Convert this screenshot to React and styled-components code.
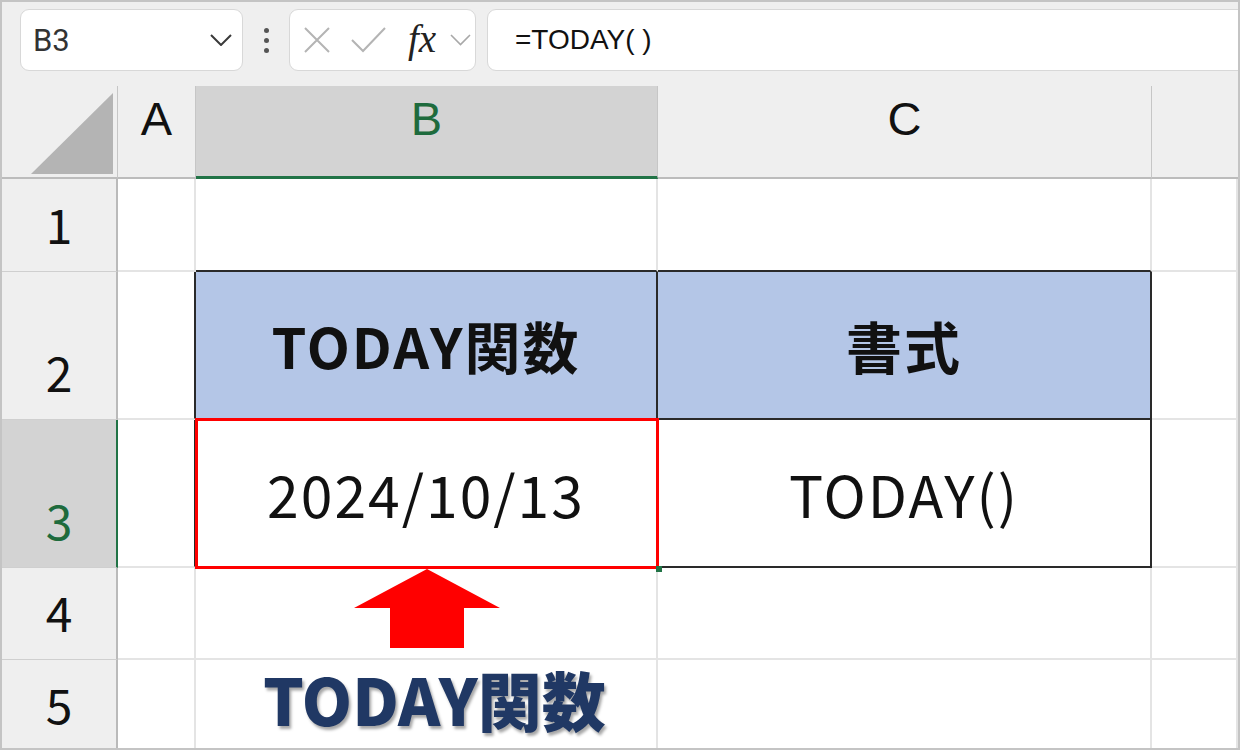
import styled, { createGlobalStyle } from "styled-components";

const GlobalStyle = createGlobalStyle`
  html, body { margin: 0; padding: 0; background: #fff; }
`;

const GRID = "#e4e4e4";
const DARK = "#2a2a2a";

function App() {
  return (
    <Frame>
      <GlobalStyle />
      <Toolbar>
        <NameBox>
          <NameText>B3</NameText>
          <svg width="22" height="12" viewBox="0 0 22 12">
            <polyline points="1,1 11,11 21,1" fill="none" stroke="#3a3a3a" strokeWidth="2" />
          </svg>
        </NameBox>
        <Dots>
          <Dot />
          <Dot />
          <Dot />
        </Dots>
        <FxBox>
          <svg width="26" height="26" viewBox="0 0 26 26">
            <path d="M1 1 L25 25 M25 1 L1 25" stroke="#b4b4b4" strokeWidth="2" fill="none" />
          </svg>
          <svg width="35" height="26" viewBox="0 0 35 26">
            <polyline points="1,13 12,24 34,1" stroke="#b4b4b4" strokeWidth="2" fill="none" />
          </svg>
          <Fx>fx</Fx>
          <svg width="21" height="12" viewBox="0 0 21 12">
            <polyline points="1,1 10.5,10.5 20,1" fill="none" stroke="#a8a8a8" strokeWidth="1.6" />
          </svg>
        </FxBox>
        <FormulaBox>=TODAY( )</FormulaBox>
      </Toolbar>

      <Sheet>
        <Corner>
          <Triangle />
        </Corner>
        <ColHead>A</ColHead>
        <ColHead $sel>B</ColHead>
        <ColHead>C</ColHead>
        <ColHead $last />

        <RowHead>1</RowHead>
        <Cell />
        <Cell $b={DARK} />
        <Cell $b={DARK} />
        <Cell />

        <RowHead>2</RowHead>
        <Cell $r={DARK} />
        <Cell $fill="#b4c6e7" $r={DARK} $b={DARK} $bold>
          TODAY関数
        </Cell>
        <Cell $fill="#b4c6e7" $r={DARK} $b={DARK} $bold>
          書式
        </Cell>
        <Cell />

        <RowHead $sel>3</RowHead>
        <Cell $r={DARK} />
        <Cell $r={DARK} $b={DARK} $top>
          2024/10/13
          <Selection>
            <Handle />
          </Selection>
        </Cell>
        <Cell $r={DARK} $b={DARK}>
          TODAY()
        </Cell>
        <Cell />

        <RowHead>4</RowHead>
        <Cell />
        <Cell />
        <Cell />
        <Cell />

        <RowHead>5</RowHead>
        <Cell />
        <Cell />
        <Cell />
        <Cell />

        <Arrow width="146" height="79" viewBox="0 0 146 79">
          <polygon points="73,0 146,39 110,39 110,79 36,79 36,39 0,39" fill="#ff0000" />
        </Arrow>
        <Label>TODAY関数</Label>
      </Sheet>
    </Frame>
  );
}

export default App;

const Frame = styled.div`
  width: 1240px;
  height: 750px;
  box-sizing: border-box;
  border: 2px solid #c4c4c4;
  overflow: hidden;
  background: #fff;
`;

const Toolbar = styled.div`
  display: flex;
  align-items: flex-start;
  height: 84px;
  box-sizing: border-box;
  padding: 7px 0 0 18px;
  background: #efefef;
  overflow: hidden;
`;

const Box = styled.div`
  box-sizing: border-box;
  height: 62px;
  background: #fff;
  border: 1px solid #d8d8d8;
  border-radius: 9px;
  display: flex;
  align-items: center;
`;

const NameBox = styled(Box)`
  width: 223px;
  padding: 0 10px 0 12px;
  justify-content: space-between;
`;

const NameText = styled.span`
  font-family: Roboto, "Liberation Sans", sans-serif;
  font-size: 31px;
  color: #333;
`;

const Dots = styled.div`
  width: 46px;
  height: 62px;
  display: flex;
  flex-direction: column;
  align-items: center;
  justify-content: center;
  gap: 5px;
`;

const Dot = styled.span`
  width: 5px;
  height: 5px;
  border-radius: 50%;
  background: #555;
`;

const FxBox = styled(Box)`
  width: 187px;
  padding-left: 14px;
  gap: 22px;

  & > svg:nth-child(2) {
    margin-left: -1px;
  }
  & > svg:last-child {
    margin-left: -8px;
  }
`;

const Fx = styled.span`
  font-family: "Liberation Serif", serif;
  font-style: italic;
  font-size: 39px;
  color: #222;
  line-height: 1;
  padding-bottom: 4px;
`;

const FormulaBox = styled(Box)`
  flex: 1;
  margin-left: 11px;
  margin-right: -12px;
  padding-left: 27px;
  font-family: "Liberation Sans", sans-serif;
  font-size: 28px;
  color: #111;
`;

const Sheet = styled.div`
  position: relative;
  display: grid;
  grid-template-columns: 116px 78px 462px 494px 1fr;
  grid-template-rows: 93px 93px 148px 148px 92px 92px;
`;

const Corner = styled.div`
  box-sizing: border-box;
  background: #efefef;
  border-right: 1px solid #c6c6c6;
  border-bottom: 2px solid #bcbcbc;
  display: flex;
  align-items: flex-end;
  justify-content: flex-end;
  padding: 0 4px 3px 0;
`;

const Triangle = styled.div`
  width: 82px;
  height: 81px;
  background: #b4b4b4;
  clip-path: polygon(100% 0, 100% 100%, 0 100%);
`;

const ColHead = styled.div`
  box-sizing: border-box;
  display: flex;
  justify-content: center;
  padding-top: 9px;
  background: ${(p) => (p.$sel ? "#d3d3d3" : "#efefef")};
  color: ${(p) => (p.$sel ? "#1e6b3d" : "#111")};
  border-right: ${(p) => (p.$last ? "none" : "1px solid #c6c6c6")};
  border-bottom: ${(p) => (p.$sel ? "3px solid #217346" : "2px solid #bcbcbc")};
  font-family: "Liberation Sans", sans-serif;
  font-size: 47px;
  line-height: 1;
`;

const RowHead = styled.div`
  box-sizing: border-box;
  display: flex;
  align-items: flex-end;
  justify-content: center;
  padding-bottom: 24px;
  background: ${(p) => (p.$sel ? "#d3d3d3" : "#efefef")};
  color: ${(p) => (p.$sel ? "#1e6b3d" : "#111")};
  border-right: 2px solid ${(p) => (p.$sel ? "#217346" : "#bababa")};
  border-bottom: 1px solid #cfcfcf;
  font-family: "Noto Sans CJK JP", sans-serif;
  font-size: 48px;
  line-height: 1;
`;

const Cell = styled.div`
  position: relative;
  z-index: ${(p) => (p.$top ? 2 : "auto")};
  box-sizing: border-box;
  display: flex;
  align-items: center;
  justify-content: center;
  background: ${(p) => p.$fill || "#fff"};
  border-right: 2px solid ${(p) => p.$r || GRID};
  border-bottom: 2px solid ${(p) => p.$b || GRID};
  font-family: "Noto Sans CJK JP", sans-serif;
  font-size: ${(p) => (p.$bold ? "56px" : "57px")};
  font-weight: ${(p) => (p.$bold ? 700 : 400)};
  letter-spacing: 2px;
  color: #111;
  line-height: 1;
`;

const Selection = styled.div`
  position: absolute;
  top: -2px;
  left: -1px;
  right: -3px;
  bottom: -3px;
  border: 3px solid #ff0000;
`;

const Handle = styled.div`
  position: absolute;
  right: -6px;
  bottom: -6px;
  width: 6px;
  height: 6px;
  background: #217346;
`;

const Arrow = styled.svg`
  position: absolute;
  z-index: 3;
  left: 352px;
  top: 483px;
`;

const Label = styled.div`
  position: absolute;
  z-index: 3;
  left: 261px;
  top: 580px;
  font-family: "Noto Sans CJK JP", sans-serif;
  font-weight: 900;
  font-size: 64px;
  line-height: 1;
  color: #203864;
  text-shadow: 2px 3px 3px rgba(0, 0, 0, 0.35);
`;
